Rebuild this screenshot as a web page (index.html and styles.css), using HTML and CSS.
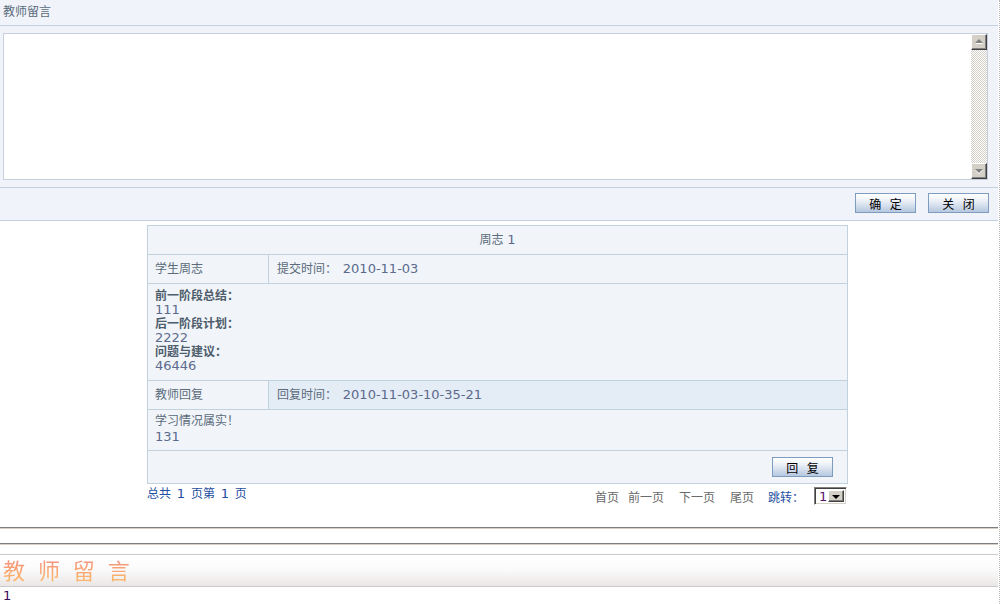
FILE: index.html
```html
<!DOCTYPE html>
<html lang="zh-CN">
<head>
    <meta charset="UTF-8">
    <title>教师留言</title>
    <link rel="stylesheet" href="styles.css">
</head>
<body>
<div class="page">
    <div class="msg-box">
        <div class="msg-head">教师留言</div>
        <div class="msg-body">
            <div class="text-wrap">
                <textarea class="msg-text"></textarea>
                <div class="scrollbar">
                    <span class="sb-btn sb-up"></span>
                    <span class="sb-track"></span>
                    <span class="sb-btn sb-down"></span>
                </div>
            </div>
        </div>
        <div class="msg-foot">
            <button class="btn">确 定</button>
            <button class="btn">关 闭</button>
        </div>
    </div>

    <table class="weekly">
        <tr>
            <td colspan="2" class="title">周志 <span class="num">1</span></td>
        </tr>
        <tr>
            <td class="name">学生周志</td>
            <td class="info">提交时间： <span class="num">2010-11-03</span></td>
        </tr>
        <tr>
            <td colspan="2" class="content">
                <div class="label">前一阶段总结：</div>
                <div class="num">111</div>
                <div class="label">后一阶段计划：</div>
                <div class="num">2222</div>
                <div class="label">问题与建议：</div>
                <div class="num">46446</div>
            </td>
        </tr>
        <tr>
            <td class="name">教师回复</td>
            <td class="info reply-time">回复时间： <span class="num">2010-11-03-10-35-21</span></td>
        </tr>
        <tr>
            <td colspan="2" class="reply">
                <div>学习情况属实！</div>
                <div class="num">131</div>
            </td>
        </tr>
        <tr>
            <td colspan="2" class="actions"><button class="btn">回 复</button></td>
        </tr>
    </table>

    <div class="pager">
        <div class="total">总共 <span class="num">1</span> 页第 <span class="num">1</span> 页</div>
        <div class="nav">
            <span class="nav-link">首页</span>
            <span class="nav-link gap-s">前一页</span>
            <span class="nav-link">下一页</span>
            <span class="nav-link">尾页</span>
            <span class="jump">跳转：</span>
            <div class="jump-select">
                <span class="sel-value">1</span>
                <span class="sel-btn"></span>
            </div>
        </div>
    </div>

    <div class="rule"></div>
    <div class="rule second"></div>

    <div class="title-bar"><span class="title-text">教 师 留 言</span></div>
    <div class="msg-count">1</div>
</div>
</body>
</html>
```

FILE: styles.css
```css
* {
    box-sizing: border-box;
    margin: 0;
    padding: 0;
}

body {
    font-family: "DejaVu Sans", "Noto Sans CJK SC", sans-serif;
    font-size: 12px;
    color: #5b6b7b;
    background: #fff;
}

.page {
    width: 1000px;
    height: 604px;
    padding-right: 1px;
    border-right: 1px dotted #b4b4b4;
    overflow: hidden;
}

.num {
    font-size: 13px;
    color: #5c6a8c;
}

/* message box */
.msg-box {
    background: #f0f4fa;
}

.msg-head {
    height: 26px;
    line-height: 24px;
    padding-left: 3px;
    border-bottom: 1px solid #c3d2de;
}

.msg-body {
    padding: 7px 10px 7px 3px;
    border-bottom: 1px solid #c3d2de;
}

.text-wrap {
    display: flex;
    height: 147px;
    border: 1px solid #c6cfdb;
    background: #fff;
}

.msg-text {
    flex: 1;
    border: none;
    outline: none;
    resize: none;
    background: #fff;
}

.scrollbar {
    width: 16px;
    display: flex;
    flex-direction: column;
}

.sb-btn {
    position: relative;
    height: 16px;
    background: #d4d0c8;
    border: 1px solid;
    border-color: #fff #404040 #404040 #fff;
    box-shadow: inset -1px -1px #808080;
}

.sb-btn::after {
    content: "";
    position: absolute;
    left: 3px;
    width: 0;
    height: 0;
    border-left: 4px solid transparent;
    border-right: 4px solid transparent;
}

.sb-up::after {
    top: 4px;
    border-bottom: 4px solid #808080;
    filter: drop-shadow(0 1px 0 #fff);
}

.sb-down::after {
    top: 5px;
    border-top: 4px solid #808080;
    filter: drop-shadow(0 1px 0 #fff);
}

.sb-track {
    flex: 1;
    background: repeating-conic-gradient(#d4d0c8 0 25%, #fff 0 50%) 0 0 / 2px 2px;
}

.msg-foot {
    height: 33px;
    display: flex;
    justify-content: flex-end;
    align-items: flex-start;
    gap: 12px;
    padding: 5px 9px 0 0;
    border-bottom: 1px solid #c3d2de;
}

.btn {
    width: 61px;
    height: 20px;
    padding-left: 3px;
    border: 1px solid #7e9cbf;
    background: linear-gradient(#ffffff 0%, #eef2f8 35%, #b6c7df 100%);
    font-family: "Noto Sans CJK SC", sans-serif;
    font-size: 12px;
    line-height: 17px;
    letter-spacing: 3px;
    color: #000;
}

/* weekly table */
.weekly {
    width: 701px;
    margin: 4px 0 0 147px;
    border-collapse: separate;
    border-spacing: 0;
    border-top: 1px solid #c1d2de;
    border-left: 1px solid #c1d2de;
    background: #f1f5fa;
}

.weekly td {
    border-right: 1px solid #c1d2de;
    border-bottom: 1px solid #c1d2de;
    line-height: 28px;
    vertical-align: top;
}

.weekly .title {
    text-align: center;
}

.weekly .name {
    width: 121px;
    padding-left: 7px;
}

.weekly .info {
    padding-left: 8px;
}

.weekly .reply-time {
    background: #e4ecf6;
}

.info .num {
    margin-left: 2px;
}

.weekly .content {
    padding: 5px 7px 7px;
    line-height: 14px;
}

.content .label {
    font-weight: bold;
    color: #4e5d6c;
}

.weekly .reply {
    padding: 3px 7px 5px;
    line-height: 16px;
}

.weekly .actions {
    padding: 6px 14px 6px 0;
    line-height: 20px;
    text-align: right;
}

.actions .btn {
    vertical-align: top;
}

/* pager */
.pager {
    width: 701px;
    margin-left: 147px;
    display: flex;
    justify-content: space-between;
    align-items: flex-start;
}

.total {
    margin-top: 2px;
    line-height: 16px;
    color: #1d4ea0;
}

.total .num {
    margin: 0 2px;
    color: #1d4ea0;
}

.nav {
    display: flex;
    align-items: center;
    height: 18px;
    margin-top: 3px;
    color: #6a6a6a;
}

.nav-link {
    margin-right: 15px;
}

.nav-link.gap-s {
    margin-left: -6px;
}

.jump {
    margin-left: -1px;
    margin-right: 10px;
    color: #1e50a2;
}

.jump-select {
    display: flex;
    width: 33px;
    height: 18px;
    margin-right: 1px;
    padding: 2px;
    border: 1px solid;
    border-color: #808080 #fff #fff #808080;
    box-shadow: inset 1px 1px #404040, inset -1px -1px #d4d0c8;
    background: #fff;
}

.sel-value {
    flex: 1;
    padding-left: 2px;
    font-size: 13px;
    line-height: 14px;
    color: #5a1070;
}

.sel-btn {
    position: relative;
    width: 16px;
    background: #d4d0c8;
    border: 1px solid;
    border-color: #fff #404040 #404040 #fff;
    box-shadow: inset -1px -1px #808080;
}

.sel-btn::after {
    content: "";
    position: absolute;
    left: 3px;
    top: 4px;
    border-left: 4px solid transparent;
    border-right: 4px solid transparent;
    border-top: 4px solid #000;
}

/* bottom */
.rule {
    height: 2px;
    margin-top: 22px;
    border-top: 1px solid #7f7f7f;
    border-bottom: 1px solid #d6d0c8;
}

.rule.second {
    margin-top: 14px;
}

.title-bar {
    height: 33px;
    margin-top: 9px;
    padding-left: 3px;
    border-top: 1px solid #cbcbcb;
    border-bottom: 1px solid #cbcbcb;
    background: linear-gradient(#ffffff 0%, #fbfbfb 45%, #ebe6e6 100%);
}

.title-text {
    display: inline-block;
    font-family: "Noto Sans CJK SC", sans-serif;
    font-size: 22px;
    line-height: 28px;
    letter-spacing: 4px;
    background: linear-gradient(#f5927c 20%, #fbb56c 85%);
    -webkit-background-clip: text;
    background-clip: text;
    color: transparent;
}

.msg-count {
    padding-left: 3px;
    font-size: 13px;
    line-height: 18px;
    color: #3c0a5a;
}
```
